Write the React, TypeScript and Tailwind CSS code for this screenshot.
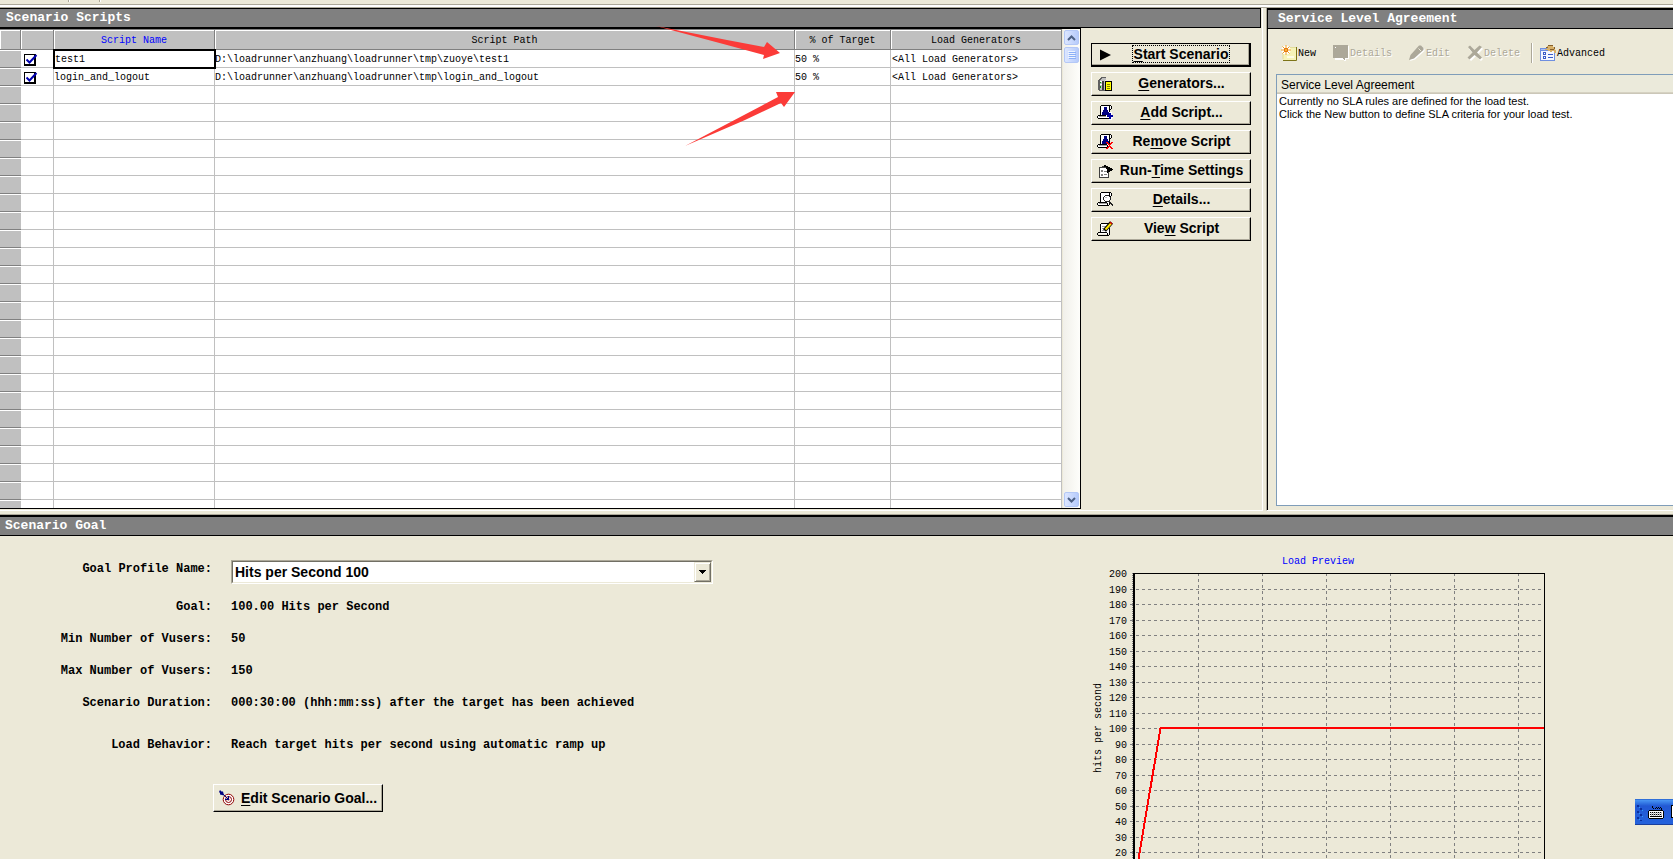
import type { ReactNode } from "react";

const MONO = "font-['Liberation_Mono','DejaVu_Sans_Mono',monospace]";

const scripts = [
  { name: "test1", path: "D:\\loadrunner\\anzhuang\\loadrunner\\tmp\\zuoye\\test1" },
  { name: "login_and_logout", path: "D:\\loadrunner\\anzhuang\\loadrunner\\tmp\\login_and_logout" },
];

function Icon({ children }: { children: ReactNode }) {
  return (
    <svg viewBox="0 0 16 16" className="size-4 shrink-0" shapeRendering="crispEdges" aria-hidden="true">
      {children}
    </svg>
  );
}

const PlayIcon = () => (
  <svg viewBox="0 0 16 16" className="size-4 shrink-0" aria-hidden="true">
    <path d="M3 2.5 14 8 3 13.5z" fill="#000" />
  </svg>
);

const GeneratorsIcon = () => (
  <Icon>
    <path d="M2 4 5 1h4v3h-1v11H2z" fill="#c0c0c0" />
    <path d="M1 4h1V3h1V2h1V1h5v1H5v1H4v1H3v10h5v1H2v-1H1z" fill="#606060" />
    <path d="M5 5h2v9H5z" fill="#404040" />
    <path d="M3 5h2v1H3zM3 8h2v1H3z" fill="#fff" />
    <path d="M3 6h1v1H3zM3 10h1v2H3z" fill="#00a000" />
    <path d="M8 5h7v10H8z" fill="#000" />
    <path d="M9 6h5v8H9z" fill="#ffff00" />
    <path d="M10 8h3v1h-3zM10 10h3v1h-3zM10 12h3v1h-3z" fill="#808000" />
  </Icon>
);

const Scroll = () => (
  <>
    <path d="M4 1h10v3h-2v9H1v-2h3z" fill="#fff" />
    <path d="M4 0h10v1H4zM3 1h1v9H3zM14 1h1v3h-1zM12 1h1v10h-1zM13 4h1v1h-1zM1 10h9v1H1zM0 11h1v2H0zM1 13h11v1H1zM10 11h1v2h-1zM12 11h1v2h-1z" fill="#000" />
    <path d="M2 11h8v1H2z" fill="#a0a0a0" />
  </>
);

const AddIcon = () => (
  <Icon>
    <Scroll />
    <path d="M7 2h3v3h1v2h1v3H5V7h1V5h1z" fill="#000080" />
    <path d="M12 7h3v3h1v3h-1v2h-3v-2H9v-3h3z" fill="#fff" />
    <path d="M12 8h2v6h-2zM10 10h6v2h-6z" fill="#0000a0" />
  </Icon>
);

const RemoveIcon = () => (
  <Icon>
    <Scroll />
    <path d="M7 2h3v3h1v2h1v3H5V7h1V5h1z" fill="#000080" />
    <path d="M9 8h2v1h1v1h1V9h1V8h2v1h-1v1h-1v1h-1v1h1v1h1v1h1v1h-2v-1h-1v-1h-1v1h-1v1H9v-1h1v-1h1v-1h1v-1h-1v-1h-1V9H9z" fill="#ff0000" />
  </Icon>
);

const RunTimeIcon = () => (
  <Icon>
    <path d="M3 5h8v9H3z" fill="#fff" />
    <path d="M2 4h3V3h3v1h3v1H2zM2 5h1v10H2zM3 14h9v1H3zM11 9h1v5h-1z" fill="#404040" />
    <path d="M4 7h2v2H4zM4 11h2v2H4z" fill="#808080" />
    <path d="M7 8h3v1H7zM7 11h3v1H7z" fill="#808080" />
    <path d="M7 2h2v1h2v1h2v1h2v1h1v1h-1v1h-2v1h-2v1h-1V6H9V4H7z" fill="#000" />
  </Icon>
);

const DetailsIcon = () => (
  <Icon>
    <Scroll />
    <path d="M8 3h4v1h1v5h-1v1H8V9H7V4h1z" fill="#fff" />
    <path d="M8 3h4v1H8zM7 4h1v1H7zM6 5h1v3H6zM7 8h1v1H7zM8 9h4v1H8zM12 8h1v1h-1zM13 5h1v3h-1zM12 4h1v1h-1zM12 9h1v1h1v1h1v1h1v2h-1v-1h-1v-1h-1v-1h-1z" fill="#202020" />
    <path d="M8 5h2v1H8z" fill="#c0c0c0" />
  </Icon>
);

const ViewIcon = () => (
  <Icon>
    <path d="M4 3h9v10H2v-2h2z" fill="#fff" />
    <path d="M4 2h8v1H4zM3 3h1v8H3zM12 7h1v7h-1zM1 11h9v1H1zM0 12h1v2H0zM1 14h11v1H1zM10 12h1v2h-1z" fill="#000" />
    <path d="M5 5h4v1H5zM5 7h3v1H5zM5 9h2v1H5z" fill="#a0a0a0" />
    <g fill="none" shapeRendering="auto">
      <path d="M14.500 1.500 7.500 9.500" stroke="#000" strokeWidth="4" />
      <path d="M14 2.500 8.500 8.500" stroke="#ffe800" strokeWidth="2" />
      <path d="M14.500 1.500l-1 1" stroke="#d00000" strokeWidth="3" />
    </g>
  </Icon>
);

const TargetIcon = () => (
  <svg viewBox="0 0 16 16" className="size-4 shrink-0" aria-hidden="true">
    <circle cx="9.5" cy="9.5" r="5.3" fill="#fff" stroke="#900000" />
    <circle cx="9.5" cy="9.5" r="3" fill="#fff" stroke="#900000" />
    <circle cx="9.5" cy="9.5" r="1" fill="#900000" />
    <path d="M1 1 9 9M6 9.500h3.500V6" stroke="#000080" fill="none" />
    <path d="M1 0l1.500 1.500L4 1.500l1 4-4-1L1 3 0 2z" fill="#000080" />
  </svg>
);

const NewIcon = () => (
  <svg viewBox="0 0 16 16" className="size-4 shrink-0" aria-hidden="true">
    <path d="M2 3h13v12H2z" fill="#f6f3b8" />
    <path d="M15.500 2v13.500H2" stroke="#7d7418" fill="none" />
    <path d="M2 14V6M8 2.500h7" stroke="#e3dc9a" fill="none" />
    <path d="M6 11h7v2H6z" fill="#fdfce6" />
    <circle cx="5" cy="5" r="4.600" fill="#fff" />
    <path d="M5 0v10M0 5h10M1.500 1.500l7 7M8.500 1.500l-7 7" stroke="#f0a020" />
    <circle cx="5" cy="5" r="2" fill="#e06000" />
    <circle cx="5" cy="5" r="1" fill="#ffd040" />
  </svg>
);

const BubbleIcon = () => (
  <Icon>
    <path d="M2 1h14v13h-3v2h-2v-1H2z" fill="#fff" />
    <path d="M0 0h15v13h-3v2h-1v-1h-1v-1H0z" fill="#aca899" />
    <path d="M2 2h1v1H2z" fill="#fff" />
  </Icon>
);

const PencilIcon = () => (
  <svg viewBox="0 0 16 16" className="size-4 shrink-0" aria-hidden="true">
    <path d="M1 16l1.500-5L11 1.500h2L15.500 4v2L6 14.500z" fill="#fff" />
    <path d="M0 15l1.500-5L10 .5h2L14.500 3v2L5 13.500z" fill="#aca899" />
    <path d="M9.500 3.500l2.500 2.500" stroke="#ece9d8" />
  </svg>
);

const DeleteIcon = () => (
  <svg viewBox="0 0 16 16" className="size-4 shrink-0" aria-hidden="true">
    <path d="M3 3l12 12M15 3 3 15" stroke="#fff" strokeWidth="3" />
    <path d="M1 2l2-1.500L7.500 5 12.500.5 15 2 10 7.500l5 5-2 2L7.500 10l-5 4.500L.5 12.500l5-5z" fill="#aca899" />
  </svg>
);

const AdvancedIcon = () => (
  <Icon>
    <path d="M0 3h15v13H0z" fill="#6f8fe0" />
    <path d="M1 6h13v9H1z" fill="#f4f7ff" />
    <path d="M1 4h6v1H1z" fill="#a8c0f4" />
    <path d="M3 7h3v3H3zM3 11h3v3H3z" fill="#3a5cc8" />
    <path d="M4 8h1v1H4zM4 12h1v1H4z" fill="#fff" />
    <path d="M8 9h5v1H8zM8 12h5v1H8z" fill="#3a5cc8" />
    <path d="M7 1h6v1h2v3h1v3h-2V6h-2v1h-2V6H8V5H5V4h2z" fill="#d8b068" />
    <path d="M8 0h5v1H8zM6 2h2v1H6zM10 4h4v1h-4zM14 2h1v2h-1z" fill="#86602a" />
  </Icon>
);

function TitleBar({ children, className }: { children: ReactNode; className: string }) {
  return (
    <h2 className={`${MONO} border-black bg-[#808080] text-[13px] leading-[18px] font-bold whitespace-nowrap text-white ${className}`}>
      {children}
    </h2>
  );
}

const raised =
  "flex items-center border border-t-white border-r-black border-b-black border-l-white bg-[#ece9d8] font-['Liberation_Sans',Arial,sans-serif] text-[14px] font-bold text-black shadow-[inset_-1px_-1px_0_#aca899]";

function SideButton({ icon, focused, children }: { icon: ReactNode; focused?: boolean; children: ReactNode }) {
  return (
    <button
      type="button"
      className={`${raised} h-6 w-40 pl-[5px] ${focused ? "border-r-2 border-b-2 outline outline-black -outline-offset-1" : ""}`}
    >
      {icon}
      <span className="flex flex-1 justify-center pb-[2px]">
        <span className={`px-px leading-4 whitespace-nowrap ${focused ? "outline-1 outline-dotted outline-black" : ""}`}>{children}</span>
      </span>
    </button>
  );
}

function U({ children }: { children: ReactNode }) {
  return <span className="underline underline-offset-2">{children}</span>;
}

function CheckBox({ label }: { label: string }) {
  return (
    <span className="ml-[3px] grid w-[14px]">
      <input
        type="checkbox"
        defaultChecked
        aria-label={label}
        className="col-start-1 row-start-1 size-3 appearance-none self-center border border-r-2 border-b-2 border-black bg-white"
      />
      <svg viewBox="0 0 14 12" className="pointer-events-none col-start-1 row-start-1 h-3 w-[14px] self-center" aria-hidden="true">
        <path d="M2.500 5.500 5.500 8.500 12.500 1" fill="none" stroke="#0000b0" strokeWidth="2" />
      </svg>
    </span>
  );
}

function ScriptGrid() {
  const head =
    "h-[21px] border-t border-r border-b border-[#808080] bg-[#c0c0c0] p-0 pt-[2px] text-center font-normal leading-[15px] shadow-[inset_1px_1px_0_#fff]";
  const rowHead = "h-[18px] border-b border-[#808080] bg-[#c0c0c0] p-0 shadow-[inset_0_1px_0_#fff]";
  const cell = "h-[18px] overflow-hidden border-r border-b border-[#c0c0c0] p-0 pt-[2px] leading-[15px] whitespace-nowrap";
  return (
    <table className={`${MONO} w-full min-w-0 flex-1 table-fixed border-separate border-spacing-0 bg-white text-[10px] text-black`}>
      <colgroup>
        <col className="w-[21px]" />
        <col className="w-[33px]" />
        <col className="w-[161px]" />
        <col />
        <col className="w-[96px]" />
        <col className="w-[171px]" />
      </colgroup>
      <thead>
        <tr>
          <th className={head} aria-label="Row" />
          <th className={head} aria-label="Selected" />
          <th className={`${head} text-[#0000ff]`}>Script Name</th>
          <th className={head}>Script Path</th>
          <th className={head}>% of Target</th>
          <th className={head}>Load Generators</th>
        </tr>
      </thead>
      <tbody>
        {scripts.map((s, i) => (
          <tr key={s.name}>
            <td className={rowHead} />
            <td className={cell}>
              <CheckBox label={s.name} />
            </td>
            <td className={`${cell} ${i === 0 ? "relative pl-px outline-2 -outline-offset-1 outline-black" : ""}`}>{s.name}</td>
            <td className={cell}>{s.path}</td>
            <td className={cell}>50 %</td>
            <td className={`${cell} pl-px`}>&lt;All Load Generators&gt;</td>
          </tr>
        ))}
        {Array.from({ length: 23 }, (_, i) => (
          <tr key={i}>
            <td className={rowHead} />
            <td className={cell} />
            <td className={cell} />
            <td className={cell} />
            <td className={cell} />
            <td className={cell} />
          </tr>
        ))}
        <tr>
          <td className="h-2 bg-[#c0c0c0] p-0 shadow-[inset_0_1px_0_#fff]" />
          <td className="border-r border-[#c0c0c0] p-0" />
          <td className="border-r border-[#c0c0c0] p-0" />
          <td className="border-r border-[#c0c0c0] p-0" />
          <td className="border-r border-[#c0c0c0] p-0" />
          <td className="border-r border-[#c0c0c0] p-0" />
        </tr>
      </tbody>
    </table>
  );
}

function ScrollBar() {
  const part = "flex w-[15px] items-center justify-center rounded-xs border border-[#b4c8f6] bg-linear-to-r from-[#dce6ff] to-[#b6cbfb]";
  return (
    <div className="flex w-[18px] flex-col items-center border-l border-[#ece9d8] bg-linear-to-r from-[#f1f0ea] to-[#fefefb] py-px">
      <button type="button" aria-label="Scroll up" className={`${part} h-[15px]`}>
        <svg viewBox="0 0 9 6" className="h-[6px] w-[9px]">
          <path d="M1 5 4.500 1.500 8 5" fill="none" stroke="#4d6185" strokeWidth="2" />
        </svg>
      </button>
      <div className={`${part} mt-[2px] h-4`}>
        <svg viewBox="0 0 8 8" className="size-2" shapeRendering="crispEdges">
          <path d="M0 0h7v1H0zM0 2h7v1H0zM0 4h7v1H0zM0 6h7v1H0z" fill="#eef4fe" />
          <path d="M1 1h7v1H1zM1 3h7v1H1zM1 5h7v1H1zM1 7h7v1H1z" fill="#8cb0f8" />
        </svg>
      </div>
      <button type="button" aria-label="Scroll down" className={`${part} mt-auto h-[15px]`}>
        <svg viewBox="0 0 9 6" className="h-[6px] w-[9px]">
          <path d="M1 1 4.500 4.500 8 1" fill="none" stroke="#4d6185" strokeWidth="2" />
        </svg>
      </button>
    </div>
  );
}

function ToolButton({ icon, disabled, children }: { icon: ReactNode; disabled?: boolean; children: ReactNode }) {
  return (
    <button
      type="button"
      disabled={disabled}
      className={`flex items-center gap-px ${disabled ? "text-[#aca899] [text-shadow:1px_1px_0_#fff]" : "text-black"}`}
    >
      {icon}
      <span>{children}</span>
    </button>
  );
}

function FormRow({ label, children }: { label: string; children: ReactNode }) {
  return (
    <div className="flex gap-[19px] leading-4">
      <dt className="w-[212px] shrink-0 text-right">{label}</dt>
      <dd>{children}</dd>
    </div>
  );
}

const PLOT = { left: 44, right: 453, top: 23, bottom: 309 };

function LoadPreview() {
  const ticks = Array.from({ length: 19 }, (_, i) => ({ value: 200 - i * 10, y: Math.round(PLOT.top + i * 15.5) }));
  const columns = Array.from({ length: 6 }, (_, i) => PLOT.left + 64 * (i + 1));
  return (
    <svg viewBox="0 0 460 309" className="h-[309px] w-[460px] shrink-0" role="img" aria-label="Load Preview">
      <g className={`${MONO} text-[10px]`} fill="#000">
        <text x="228" y="14" textAnchor="middle" fill="#0000ff">
          Load Preview
        </text>
        {ticks.map((t) => (
          <text key={t.value} x="37" y={t.y + 4} textAnchor="end">
            {t.value}
          </text>
        ))}
        <text transform="translate(11 178) rotate(-90)" textAnchor="middle">
          hits per second
        </text>
      </g>
      <g shapeRendering="crispEdges" fill="none">
        {ticks.slice(1).map((t) => (
          <path key={t.value} d={`M${PLOT.left - 4} ${t.y + 0.5}H${PLOT.right}`} stroke="#808080" strokeDasharray="3 3" />
        ))}
        {columns.map((x) => (
          <path key={x} d={`M${x + 0.5} ${PLOT.top}V${PLOT.bottom}`} stroke="#808080" strokeDasharray="3 3" />
        ))}
        <path d={`M${PLOT.left - 1.5} ${PLOT.top}V${PLOT.bottom}`} stroke="#808080" strokeDasharray="1 1" />
        <path d={`M${PLOT.left} ${PLOT.top}V${PLOT.bottom}`} stroke="#000" strokeWidth="2" />
        <path d={`M${PLOT.left} ${PLOT.top + 0.5}H${PLOT.right + 1.5}V${PLOT.bottom}`} stroke="#000" />
        <path d={`M48.500 ${PLOT.bottom}L70.500 178H${PLOT.right + 1}`} stroke="#ff0000" strokeWidth="2" />
      </g>
    </svg>
  );
}

export default function App() {
  return (
    <div className="flex h-screen flex-col overflow-hidden bg-[#ece9d8]">
      <div className="flex h-2 shrink-0 flex-col border-b border-[#aca899] bg-white">
        <div className="flex h-[5px] gap-[29px] border-b border-[#aca899] bg-[#ece9d8] pl-[68px]">
          <span className="mb-0.5 w-0.5 border-r border-l border-r-white border-l-[#aca899]" />
          <span className="mb-0.5 w-0.5 border-r border-l border-r-white border-l-[#aca899]" />
        </div>
      </div>

      <div className="flex shrink-0 gap-[3px]">
        <section className="min-w-0 flex-1 border-r border-b border-white pr-px pb-px">
          <TitleBar className="border-t border-r border-b pl-[6px]">Scenario Scripts</TitleBar>
          <div className="flex">
            <div className="relative flex min-w-0 flex-1 border-t border-r border-b border-black">
              <ScriptGrid />
              <ScrollBar />
              <svg viewBox="0 0 140 122" className="pointer-events-none absolute -top-[3px] right-[284px] h-[122px] w-[140px]" aria-hidden="true">
                <g fill="#fb3b38">
                  <path d="M0 0l71 14 37 7 3-5 13 11-17 6 1-4-37-10z" />
                  <path d="M29 120l93-49-2-5h19l-11 15-3-4-36 17z" />
                </g>
              </svg>
            </div>
            <div className="flex w-[180px] shrink-0 flex-col gap-[5px] pt-[15px] pl-[10px]">
              <SideButton icon={<PlayIcon />} focused>
                <U>S</U>tart Scenario
              </SideButton>
              <SideButton icon={<GeneratorsIcon />}>
                <U>G</U>enerators...
              </SideButton>
              <SideButton icon={<AddIcon />}>
                <U>A</U>dd Script...
              </SideButton>
              <SideButton icon={<RemoveIcon />}>
                Re<U>m</U>ove Script
              </SideButton>
              <SideButton icon={<RunTimeIcon />}>
                Run-<U>T</U>ime Settings
              </SideButton>
              <SideButton icon={<DetailsIcon />}>
                <U>D</U>etails...
              </SideButton>
              <SideButton icon={<ViewIcon />}>
                Vie<U>w</U> Script
              </SideButton>
            </div>
          </div>
        </section>

        <section className="flex w-[407px] shrink-0 border-b border-l border-b-white border-l-[#aca899]">
          <div className="flex min-w-0 flex-1 flex-col border-l border-black">
            <TitleBar className="border-t-2 border-b pl-[10px]">Service Level Agreement</TitleBar>
            <div className={`${MONO} flex h-[45px] items-center gap-[17px] pt-[3px] pl-[13px] text-[10px]`}>
              <ToolButton icon={<NewIcon />}>New</ToolButton>
              <ToolButton icon={<BubbleIcon />} disabled>
                Details
              </ToolButton>
              <ToolButton icon={<PencilIcon />} disabled>
                Edit
              </ToolButton>
              <ToolButton icon={<DeleteIcon />} disabled>
                Delete
              </ToolButton>
              <div className="-ml-1.5 flex items-center gap-[7px]">
                <span className="h-5 w-0.5 shrink-0 border-r border-l border-r-white border-l-[#aca899]" />
                <ToolButton icon={<AdvancedIcon />}>Advanced</ToolButton>
              </div>
            </div>
            <div className="mb-1 ml-2 flex-1 border-t border-b border-l border-[#7f9db9] bg-white font-['Liberation_Sans',Arial,sans-serif] text-black">
              <h3 className="h-[19px] border-b border-[#cbc7b8] bg-[#ebeadb] pl-1 text-[12px] leading-5 shadow-[inset_0_-1px_0_#d6d2c2]">
                Service Level Agreement
              </h3>
              <p className="pt-px pl-[2px] text-[11px] leading-[13px]">
                Currently no SLA rules are defined for the load test.
                <br />
                Click the New button to define SLA criteria for your load test.
              </p>
            </div>
          </div>
        </section>
      </div>

      <section className="mt-[3px] flex min-h-0 flex-1 flex-col border-t border-[#aca899]">
        <TitleBar className="shrink-0 border-t-2 border-b pl-[5px]">Scenario Goal</TitleBar>
        <div className="flex min-h-0 flex-1 justify-between">
          <form className={`${MONO} pt-6 text-[12px] font-bold text-black`}>
            <div className="flex gap-[19px]">
              <label htmlFor="profile" className="w-[212px] shrink-0 text-right leading-[18px]">
                Goal Profile Name:
              </label>
              <div className="grid w-[482px] border border-t-[#aca899] border-r-white border-b-white border-l-[#aca899]">
                <select
                  id="profile"
                  className="col-start-1 row-start-1 h-[22px] appearance-none border border-t-[#716f64] border-r-[#ece9d8] border-b-[#ece9d8] border-l-[#716f64] bg-white pl-[2px] font-['Liberation_Sans',Arial,sans-serif] text-[14px] font-bold"
                >
                  <option>Hits per Second 100</option>
                </select>
                <span className="pointer-events-none col-start-1 row-start-1 mr-px flex h-5 w-[17px] items-center justify-center self-center justify-self-end border border-t-[#ece9d8] border-r-[#716f64] border-b-[#716f64] border-l-[#ece9d8] bg-[#ece9d8] shadow-[inset_1px_1px_0_#fff,inset_-1px_-1px_0_#aca899]">
                  <svg viewBox="0 0 7 4" className="h-1 w-[7px]" shapeRendering="crispEdges" aria-hidden="true">
                    <path d="M0 0h7v1H6v1H5v1H4v1H3V3H2V2H1V1H0z" fill="#000" />
                  </svg>
                </span>
              </div>
            </div>
            <dl className="mt-[15px] flex flex-col gap-4 whitespace-nowrap">
              <FormRow label="Goal:">100.00 Hits per Second</FormRow>
              <FormRow label="Min Number of Vusers:">50</FormRow>
              <FormRow label="Max Number of Vusers:">150</FormRow>
              <FormRow label="Scenario Duration:">000:30:00 (hhh:mm:ss) after the target has been achieved</FormRow>
            </dl>
            <dl className="mt-[26px] whitespace-nowrap">
              <FormRow label="Load Behavior:">Reach target hits per second using automatic ramp up</FormRow>
            </dl>
            <button type="button" className={`${raised} mt-[31px] ml-[213px] h-7 w-[170px] gap-[6px] pl-[5px]`}>
              <TargetIcon />
              <span className="whitespace-nowrap">
                <U>E</U>dit Scenario Goal...
              </span>
            </button>
          </form>
          <div className="pt-[14px] pr-[123px]">
            <LoadPreview />
          </div>
        </div>
      </section>

      <div className="fixed right-0 bottom-[34px] flex h-[26px] w-[38px] items-center overflow-hidden border-t border-b border-t-[#2f6fd8] border-b-[#1a3f9c] bg-linear-to-b from-[#4a96f4] via-[#2258d4] via-25% to-[#2462dc]">
        <svg viewBox="0 0 38 24" className="h-6 w-[38px] shrink-0" shapeRendering="crispEdges" role="img" aria-label="Language bar keyboard">
          <path d="M2 5h2v2H2zM5 8h2v2H5zM2 11h2v2H2zM5 14h2v2H5zM2 17h2v2H2zM5 20h2v1H5z" fill="#0a2f9c" />
          <path d="M4 7h1v1H4zM7 10h1v1H7zM4 13h1v1H4zM7 16h1v1H7zM4 19h1v1H4z" fill="#2f9cf4" />
          <path d="M14 10h14v1h1v7h-1v1H14v-1h-1v-7h1z" fill="#000" />
          <path d="M14 11h14v7H14z" fill="#fff" />
          <path d="M15 12h12v1H15zM15 14h12v1H15zM15 16h12v1H15z" fill="#000" />
          <path d="M16 12h1v4h-1zM18 12h1v4h-1zM20 12h1v4h-1zM22 12h1v4h-1zM24 12h1v4h-1zM26 12h1v4h-1z" fill="#c0c0c0" />
          <path d="M17 6h1v2h1v1h-1V8h-1zM20 8h1v1h-1zM21 7h1v1h-1zM22 8h1v1h-1zM23 7h1v1h-1zM24 8h1v1h-1zM25 7h1v1h1v2h-1V8h-1z" fill="#000" />
          <path d="M36 5h2v13h-2z" fill="#000" />
          <path d="M37 6h1v11h-1z" fill="#fff" />
        </svg>
      </div>
    </div>
  );
}
